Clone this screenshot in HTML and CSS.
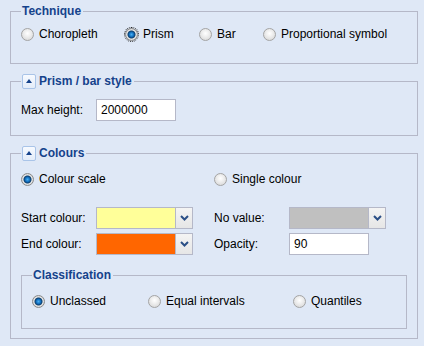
FILE: index.html
```html
<!DOCTYPE html>
<html>
    <head>
        <link rel="stylesheet" href="styles.css">
    </head>
    <body>
        <fieldset class="group">
            <legend class="group-title">Technique</legend>
            <div class="radio-row technique">
                <label class="radio-item"><span class="radio"></span>Choropleth</label>
                <label class="radio-item"><span class="radio checked focused"></span>Prism</label>
                <label class="radio-item"><span class="radio"></span>Bar</label>
                <label class="radio-item"><span class="radio"></span>Proportional symbol</label>
            </div>
        </fieldset>

        <fieldset class="group prism">
            <legend class="group-title">
                <span class="collapse-btn"></span>Prism / bar style
            </legend>
            <div class="field">
                <span class="field-label">Max height:</span>
                <input class="text-input" type="text" value="2000000">
            </div>
        </fieldset>

        <fieldset class="group colours">
            <legend class="group-title">
                <span class="collapse-btn"></span>Colours
            </legend>
            <div class="radio-row two-col">
                <label class="radio-item"><span class="radio checked"></span>Colour scale</label>
                <label class="radio-item"><span class="radio"></span>Single colour</label>
            </div>

            <div class="field-grid">
                <div class="field">
                    <span class="field-label">Start colour:</span>
                    <div class="combo">
                        <span class="swatch" style="background: #ffff99"></span>
                        <span class="trigger">
                            <svg width="9" height="6" viewBox="0 0 9 6"><path d="M1 1 L4.5 4.5 L8 1" fill="none" stroke="#2b4f86" stroke-width="2"/></svg>
                        </span>
                    </div>
                </div>
                <div class="field">
                    <span class="field-label">No value:</span>
                    <div class="combo">
                        <span class="swatch" style="background: #c0c0c0"></span>
                        <span class="trigger">
                            <svg width="9" height="6" viewBox="0 0 9 6"><path d="M1 1 L4.5 4.5 L8 1" fill="none" stroke="#2b4f86" stroke-width="2"/></svg>
                        </span>
                    </div>
                </div>
                <div class="field">
                    <span class="field-label">End colour:</span>
                    <div class="combo">
                        <span class="swatch" style="background: #ff6600"></span>
                        <span class="trigger">
                            <svg width="9" height="6" viewBox="0 0 9 6"><path d="M1 1 L4.5 4.5 L8 1" fill="none" stroke="#2b4f86" stroke-width="2"/></svg>
                        </span>
                    </div>
                </div>
                <div class="field">
                    <span class="field-label">Opacity:</span>
                    <input class="text-input" type="text" value="90">
                </div>
            </div>

            <fieldset class="group classification">
                <legend class="group-title">Classification</legend>
                <div class="radio-row three-col">
                    <label class="radio-item"><span class="radio checked"></span>Unclassed</label>
                    <label class="radio-item"><span class="radio"></span>Equal intervals</label>
                    <label class="radio-item"><span class="radio"></span>Quantiles</label>
                </div>
            </fieldset>
        </fieldset>
    </body>
</html>
```

FILE: styles.css
```css
* {
    box-sizing: border-box;
}

body {
    margin: 0;
    padding: 3px 0 0 10px;
    background: #dfe8f6;
    font-family: Tahoma, 'Liberation Sans', Arial, sans-serif;
    font-size: 12px;
    color: #000;
}

.group {
    width: 408px;
    margin: 0 0 9px;
    padding: 4px 10px 18px;
    border: 1px solid #b5b8c8;
    min-width: 0;
}

.group-title {
    display: flex;
    align-items: center;
    height: 16px;
    padding: 0 2px 0 1px;
    font-weight: bold;
    font-size: 12px;
    color: #15428b;
}

.collapse-btn {
    position: relative;
    width: 14px;
    height: 15px;
    margin-right: 3px;
    border: 1px solid #a9c4e8;
    border-radius: 2px;
    background: linear-gradient(#f7faff, #e3ecf9);
}

.collapse-btn:after {
    content: '';
    position: absolute;
    left: 3px;
    top: 4px;
    border-left: 3.5px solid transparent;
    border-right: 3.5px solid transparent;
    border-bottom: 4px solid #15428b;
}

.radio-row {
    display: grid;
    height: 22px;
    align-items: center;
}

.technique {
    grid-template-columns: 104px 74px 64px auto;
}

.two-col {
    grid-template-columns: 193px auto;
}

.three-col {
    grid-template-columns: 116px 145px auto;
}

.radio-item {
    display: flex;
    align-items: center;
    gap: 5px;
    white-space: nowrap;
}

.radio {
    width: 13px;
    height: 13px;
    border-radius: 50%;
    border: 1px solid #a4a4a4;
    background: radial-gradient(circle at 50% 40%, #ffffff 0, #f0f0f0 35%, #d2d2d2 100%);
}

.radio.checked {
    border-color: #8a8a8a;
    background: radial-gradient(circle, #4ab0f0 0, #1677c8 2px, #0b3f70 3.5px, #e6e6e6 4.5px, #cfcfcf 6px);
}

.radio.focused {
    outline: 1px dotted #222;
    outline-offset: 0;
}

.prism {
    padding: 10px 10px 14px;
}

.field {
    display: flex;
    align-items: center;
    height: 22px;
}

.field-label {
    width: 75px;
    flex-shrink: 0;
}

.text-input {
    width: 80px;
    height: 22px;
    margin: 0;
    padding: 0 4px;
    border: 1px solid #b5b8c8;
    background: #fff;
    font: inherit;
    color: #000;
    outline: none;
}

.colours {
    margin-bottom: 0;
    padding: 7px 10px 9px;
}

.field-grid {
    display: grid;
    grid-template-columns: 193px auto;
    row-gap: 4px;
    margin-top: 17px;
}

.combo {
    display: flex;
    width: 97px;
    height: 22px;
}

.swatch {
    width: 80px;
    border: 1px solid #b5b8c8;
}

.trigger {
    display: flex;
    align-items: center;
    justify-content: center;
    width: 17px;
    border: 1px solid #b5b8c8;
    border-left: none;
    background: linear-gradient(#f4f4f4, #e6e6e6);
}

.classification {
    width: auto;
    margin: 12px 0 0;
    padding: 7px 10px 16px;
}
```
